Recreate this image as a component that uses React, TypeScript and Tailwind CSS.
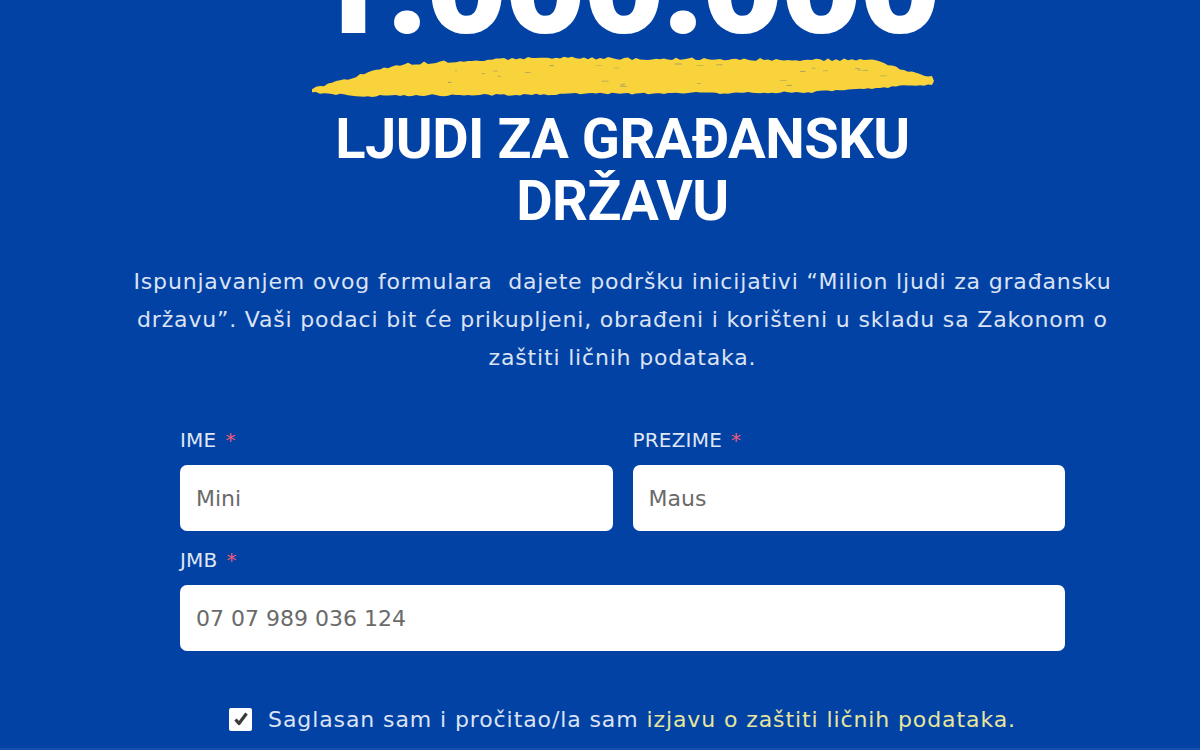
import React from "react";

const pop = "font-['DejaVu_Sans',_'Open_Sans',_sans-serif]";

function rand(seed: number) {
  const x = Math.sin(seed * 12.9898) * 43758.5453;
  return x - Math.floor(x);
}

function strokePath(): string {
  const top: [number, number][] = [];
  const bot: [number, number][] = [];
  const topY = (x: number) => {
    if (x < 90) return 34 - (x / 90) * 24;
    if (x < 220) return 10 - ((x - 90) / 130) * 6;
    if (x < 560) return 4 + ((x - 220) / 340) * 2;
    return 6 + ((x - 560) / 62) * 18;
  };
  const botY = (x: number) => {
    if (x < 40) return 38 + (x / 40) * 4;
    if (x < 500) return 42 - ((x - 40) / 460) * 4;
    return 38 - ((x - 500) / 122) * 8;
  };
  for (let x = 0; x <= 622; x += 4) {
    top.push([x, topY(x) + (rand(x + 1) - 0.5) * 3]);
    bot.push([x, botY(x) + (rand(x + 500) - 0.5) * 2.2]);
  }
  let d = `M0 36 `;
  for (const [x, y] of top) d += `L${x.toFixed(1)} ${y.toFixed(1)} `;
  d += `L622 27 `;
  for (let i = bot.length - 1; i >= 0; i--) d += `L${bot[i][0].toFixed(1)} ${bot[i][1].toFixed(1)} `;
  d += "Z";
  return d;
}

function specks() {
  const out: React.ReactElement[] = [];
  for (let i = 0; i < 28; i++) {
    const x = 70 + rand(i + 900) * 520;
    const y = 7 + rand(i + 1300) * 28;
    const w = 2 + rand(i + 1700) * 5;
    out.push(
      <rect key={i} x={x} y={y} width={w} height={1} fill="#0242a5" opacity={0.15 + rand(i + 2100) * 0.2} />
    );
  }
  return out;
}

function Label({ text }: { text: string }) {
  return (
    <div className={`${pop} text-[20px] leading-none text-[#dfe6f4] h-[50px] flex items-center tracking-[0.2px]`}>
      {text}
      <span className="ml-[9px] text-[#ef5a76]">*</span>
    </div>
  );
}

function Field({ value }: { value: string }) {
  return (
    <div className={`h-[66px] rounded-[7px] bg-white flex items-center pl-4 ${pop} text-[22px] text-[#6a6a6a]`}>
      {value}
    </div>
  );
}

export default function App() {
  const d = strokePath();
  return (
    <div className="w-[1200px] h-[750px] overflow-hidden bg-[#0242a5] border-b-2 border-[#1550ad]">
      <div className="flex flex-col items-center pl-[45px]">
        <div className="mt-[-86px] h-[142px] font-['Roboto',_sans-serif] font-black text-white text-[142px] leading-none tracking-[-3.5px]">
          1.000.000
        </div>
        <svg width="622" height="44" viewBox="0 0 622 44" className="mt-[-2px]">
          <path d={d} fill="#f8d33c" />
          {specks()}
        </svg>
        <div className="mt-[10px] font-['Roboto',_sans-serif] font-bold text-white text-[56px] leading-[62px] text-center tracking-[-0.5px]">
          LJUDI ZA GRAĐANSKU
          <br />
          DRŽAVU
        </div>
        <div className={`mt-[31px] ${pop} text-[22px] leading-[38px] text-[#dbe3f4] text-center tracking-[0.82px] whitespace-nowrap`}>
          Ispunjavanjem ovog formulara&nbsp; dajete podršku inicijativi “Milion ljudi za građansku
          <br />
          državu”. Vaši podaci bit će prikupljeni, obrađeni i korišteni u skladu sa Zakonom o
          <br />
          zaštiti ličnih podataka.
        </div>
        <div className="mt-[38px] w-[885px]">
          <div className="grid grid-cols-2 gap-x-5">
            <div>
              <Label text="IME" />
              <Field value="Mini" />
            </div>
            <div>
              <Label text="PREZIME" />
              <Field value="Maus" />
            </div>
          </div>
          <div className="mt-[4px]">
            <Label text="JMB" />
            <Field value="07 07 989 036 124" />
          </div>
          <div className="mt-[53px] h-[30px] flex items-center justify-center gap-[16px]">
            <div className="w-[23px] h-[23px] bg-white rounded-[2px] flex items-center justify-center shrink-0">
              <svg width="16" height="16" viewBox="0 0 16 16">
                <path d="M2.5 8.5 L6 12.5 L13.5 2.5" fill="none" stroke="#3a3a3a" strokeWidth="3.2" strokeLinejoin="round" />
              </svg>
            </div>
            <div className={`${pop} text-[22px] text-[#dbe3f4] tracking-[0.9px] whitespace-nowrap`}>
              Saglasan sam i pročitao/la sam <span className="text-[#e6e59c]">izjavu o zaštiti ličnih podataka.</span>
            </div>
          </div>
        </div>
      </div>
    </div>
  );
}
